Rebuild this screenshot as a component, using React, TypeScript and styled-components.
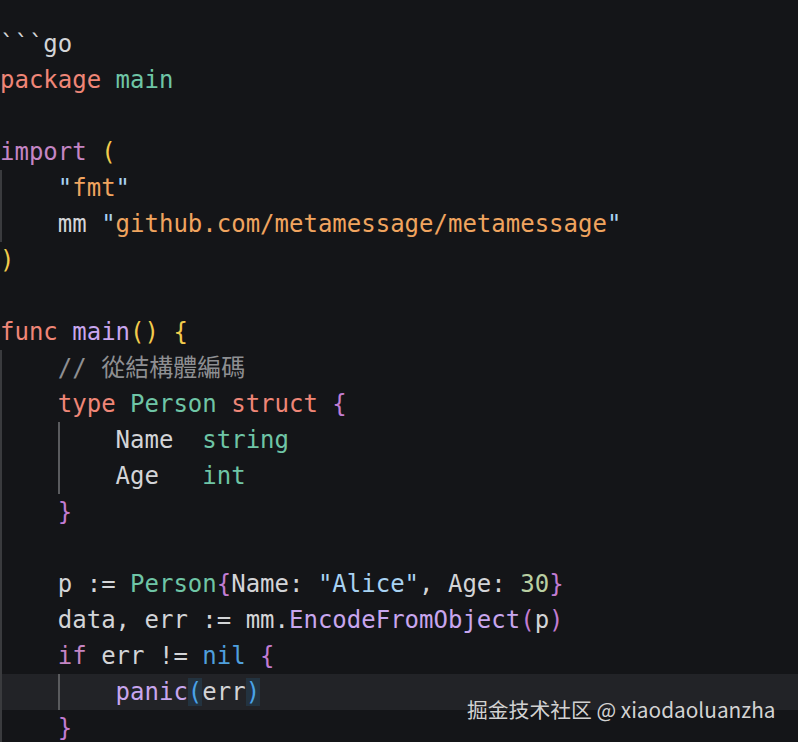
import React from "react";
import styled, { createGlobalStyle } from "styled-components";

const Global = createGlobalStyle`
  html, body { margin: 0; padding: 0; background: #141518; }
  body { width: 798px; height: 742px; overflow: hidden; }
`;

const Editor = styled.div`
  position: relative;
  width: 798px;
  height: 742px;
  background: #141518;
  padding-top: 26px;
  box-sizing: border-box;
  overflow: hidden;
  font-family: "DejaVu Sans Mono", "Noto Sans CJK TC", monospace;
  font-size: 24px;
  color: #d3d4d7;
`;

const Line = styled.div<{ $active?: boolean }>`
  display: flex;
  height: 36px;
  line-height: 36px;
  white-space: pre;
  background: ${(p) => (p.$active ? "#222327" : "transparent")};
`;

const Indent = styled.span<{ $guide: "none" | "outer" | "inner" }>`
  display: inline-block;
  width: 57.8px;
  height: 36px;
  flex: none;
  box-sizing: border-box;
  border-left: 2px solid
    ${(p) =>
      p.$guide === "outer" ? "#3a3b3e" : p.$guide === "inner" ? "#5a5b5e" : "transparent"};
`;

const Code = styled.span`
  display: inline-block;
`;

const T = styled.span<{ $c: string }>`
  color: ${(p) => p.$c};
`;

const Bracket = styled.span`
  color: #4aa3e8;
  background: #233340;
`;

const Watermark = styled.div`
  position: absolute;
  left: 467px;
  top: 694px;
  font-family: "Noto Sans CJK SC", "Noto Sans", sans-serif;
  font-size: 20.8px;
  line-height: 30px;
  color: #d2d2d2;
  white-space: nowrap;
`;

const C = {
  kw: "#ef8677",
  teal: "#6fc5a6",
  purple: "#c485c4",
  fn: "#c8a6ee",
  yellow: "#f2cb4c",
  brace: "#c27cd2",
  str: "#f0a45f",
  quote: "#a8d2f2",
  blue: "#4f9fdc",
  comment: "#8e8f92",
  num: "#b9cfa2",
};

type G = "none" | "outer" | "inner";

const L = ({ guides = [], active, children }: { guides?: G[]; active?: boolean; children?: React.ReactNode }) => (
  <Line $active={active}>
    {guides.map((g, i) => (
      <Indent key={i} $guide={g} />
    ))}
    <Code>{children}</Code>
  </Line>
);

export default function App() {
  return (
    <>
      <Global />
      <Editor>
        <L>```go</L>
        <L>
          <T $c={C.kw}>package</T> <T $c={C.teal}>main</T>
        </L>
        <L />
        <L>
          <T $c={C.purple}>import</T> <T $c={C.yellow}>(</T>
        </L>
        <L guides={["outer"]}>
          <T $c={C.quote}>"</T>
          <T $c={C.str}>fmt</T>
          <T $c={C.quote}>"</T>
        </L>
        <L guides={["outer"]}>
          mm <T $c={C.quote}>"</T>
          <T $c={C.str}>github.com/metamessage/metamessage</T>
          <T $c={C.quote}>"</T>
        </L>
        <L>
          <T $c={C.yellow}>)</T>
        </L>
        <L />
        <L>
          <T $c={C.kw}>func</T> <T $c={C.fn}>main</T>
          <T $c={C.yellow}>()</T> <T $c={C.yellow}>{"{"}</T>
        </L>
        <L guides={["outer"]}>
          <T $c={C.comment}>// 從結構體編碼</T>
        </L>
        <L guides={["outer"]}>
          <T $c={C.kw}>type</T> <T $c={C.teal}>Person</T> <T $c={C.kw}>struct</T>{" "}
          <T $c={C.brace}>{"{"}</T>
        </L>
        <L guides={["outer", "inner"]}>
          Name  <T $c={C.teal}>string</T>
        </L>
        <L guides={["outer", "inner"]}>
          Age   <T $c={C.teal}>int</T>
        </L>
        <L guides={["outer"]}>
          <T $c={C.brace}>{"}"}</T>
        </L>
        <L guides={["outer"]} />
        <L guides={["outer"]}>
          p := <T $c={C.teal}>Person</T>
          <T $c={C.brace}>{"{"}</T>Name: <T $c={C.quote}>"Alice"</T>, Age: <T $c={C.num}>30</T>
          <T $c={C.brace}>{"}"}</T>
        </L>
        <L guides={["outer"]}>
          data, err := mm.<T $c={C.fn}>EncodeFromObject</T>
          <T $c={C.brace}>(</T>p<T $c={C.brace}>)</T>
        </L>
        <L guides={["outer"]}>
          <T $c={C.purple}>if</T> err != <T $c={C.blue}>nil</T> <T $c={C.brace}>{"{"}</T>
        </L>
        <L guides={["outer", "inner"]} active>
          <T $c={C.fn}>panic</T>
          <Bracket>(</Bracket>err<Bracket>)</Bracket>
        </L>
        <L guides={["outer"]}>
          <T $c={C.brace}>{"}"}</T>
        </L>
        <Watermark>掘金技术社区 @ xiaodaoluanzha</Watermark>
      </Editor>
    </>
  );
}
